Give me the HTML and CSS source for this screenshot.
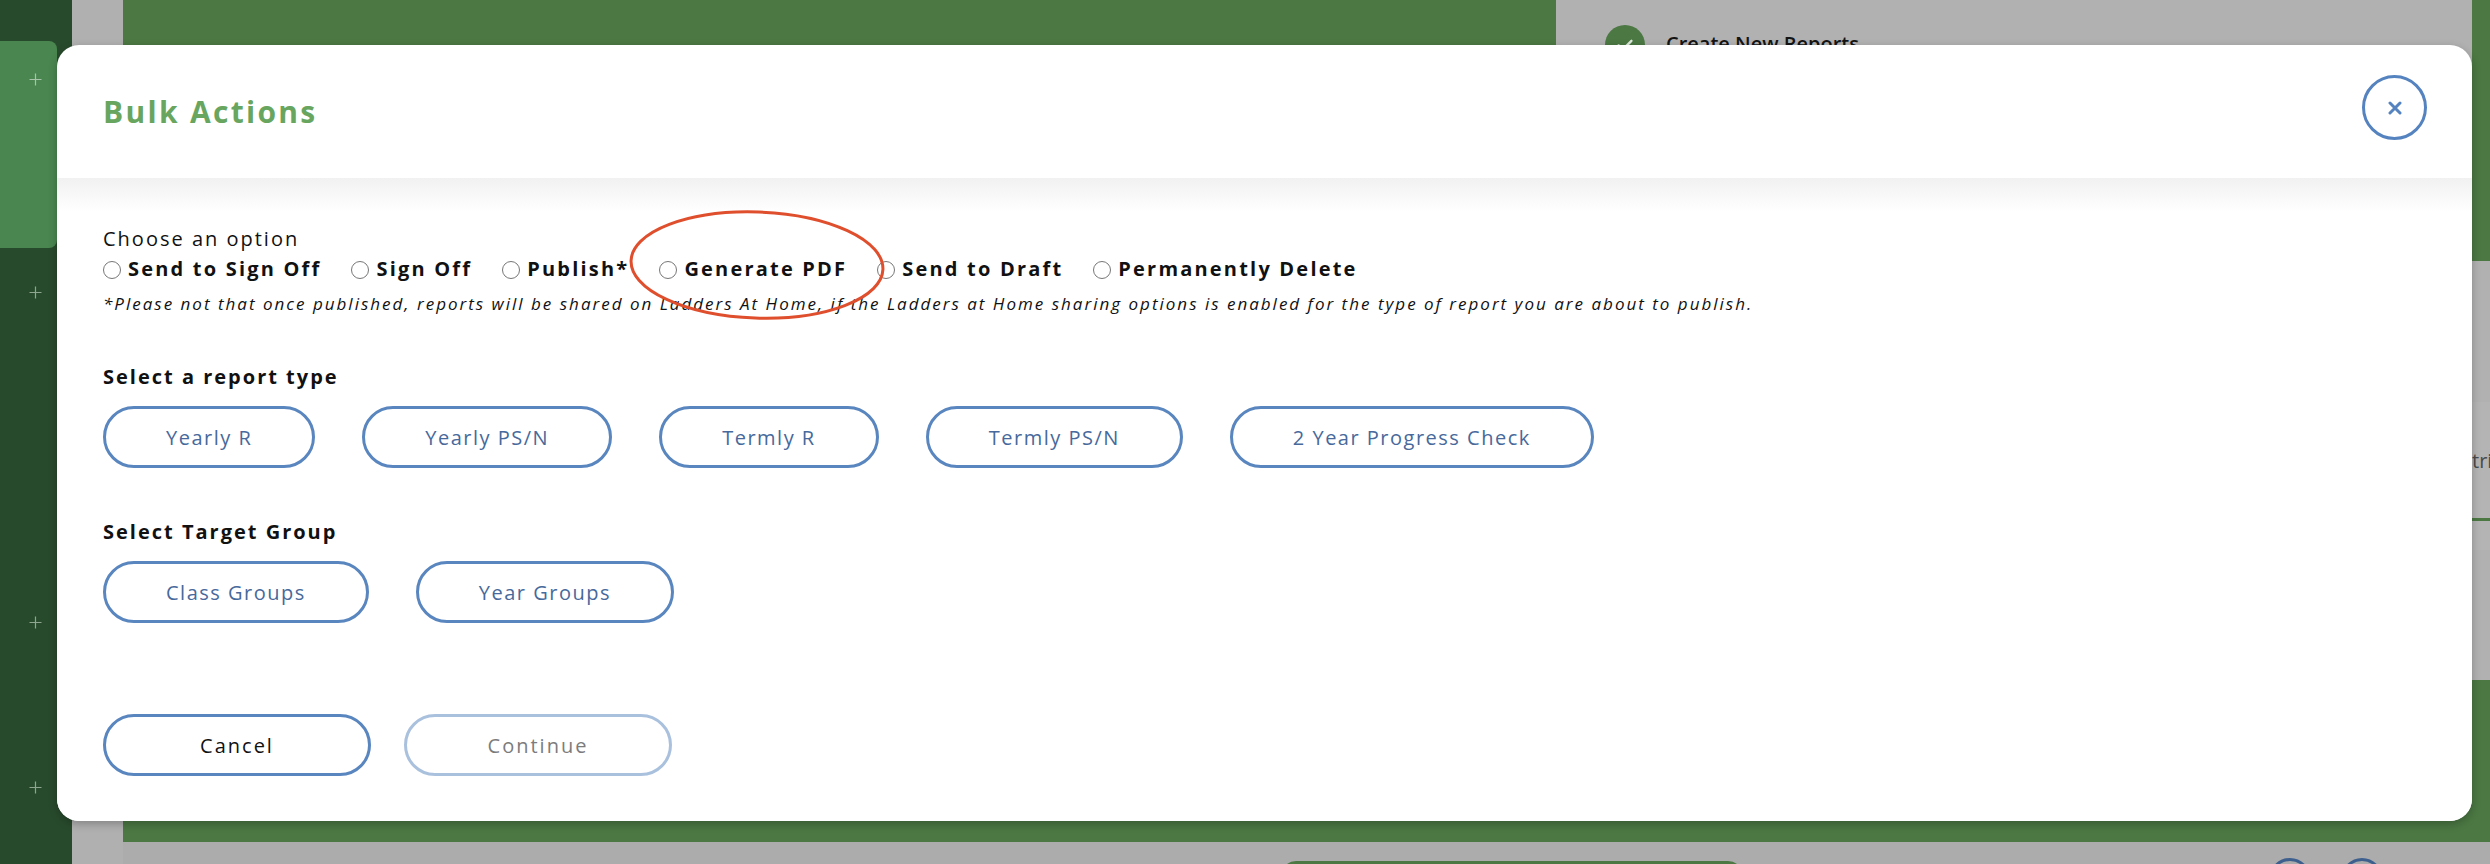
FILE: index.html
```html
<!DOCTYPE html>
<html lang="en">
<head>
<meta charset="utf-8">
<title>Bulk Actions</title>
<link rel="stylesheet" href="styles.css">
</head>
<body>
<div class="page">
  <aside class="sidebar">
    <div class="side-active">
      <svg class="plus" viewBox="0 0 13 13"><path d="M6.5 0.5v12M0.5 6.5h12" /></svg>
    </div>
    <svg class="plus plus-2" viewBox="0 0 13 13"><path d="M6.5 0.5v12M0.5 6.5h12" /></svg>
    <svg class="plus plus-3" viewBox="0 0 13 13"><path d="M6.5 0.5v12M0.5 6.5h12" /></svg>
    <svg class="plus plus-4" viewBox="0 0 13 13"><path d="M6.5 0.5v12M0.5 6.5h12" /></svg>
  </aside>
  <div class="gutter"></div>
  <main class="main">
    <div class="main-top">
      <section class="green-panel"></section>
      <section class="right-panel">
        <div class="rp-content">
          <span class="check">
            <svg viewBox="0 0 24 24" width="22" height="22"><path d="M5 12.5l4.5 4.5L19 7.5" fill="none" stroke="#dfe9dc" stroke-width="2.6" stroke-linecap="round" stroke-linejoin="round"/></svg>
          </span>
          <span class="rp-title">Create New Reports</span>
        </div>
        <div class="rp-edge">
          <div class="edge-green"></div>
          <div class="edge-card">
            <span class="edge-text">tri</span>
            <div class="edge-line"></div>
          </div>
        </div>
      </section>
    </div>
    <div class="green-band"></div>
    <footer class="footer">
      <div class="footer-bar"></div>
      <div class="footer-circles">
        <span class="fcircle"></span>
        <span class="fcircle"></span>
      </div>
    </footer>
  </main>
</div>

<div class="modal">
  <header class="modal-header">
    <h2 class="modal-title">Bulk Actions</h2>
    <button class="close-btn" aria-label="Close">
      <svg viewBox="0 0 14 14" width="14" height="14"><path d="M2 2l10 10M12 2L2 12" fill="none" stroke="#5583c0" stroke-width="3" stroke-linecap="round"/></svg>
    </button>
  </header>
  <div class="modal-body">
    <p class="label">Choose an option</p>
    <div class="radios">
      <label class="radio-opt"><span class="radio"></span>Send to Sign Off</label>
      <label class="radio-opt"><span class="radio"></span>Sign Off</label>
      <label class="radio-opt"><span class="radio"></span>Publish*</label>
      <label class="radio-opt"><span class="radio"></span>Generate PDF</label>
      <label class="radio-opt"><span class="radio"></span>Send to Draft</label>
      <label class="radio-opt"><span class="radio"></span>Permanently Delete</label>
    </div>
    <p class="note">*Please not that once published, reports will be shared on Ladders At Home, if the Ladders at Home sharing options is enabled for the type of report you are about to publish.</p>

    <h3 class="section-title">Select a report type</h3>
    <div class="chip-row">
      <button class="chip">Yearly R</button>
      <button class="chip">Yearly PS/N</button>
      <button class="chip">Termly R</button>
      <button class="chip">Termly PS/N</button>
      <button class="chip">2 Year Progress Check</button>
    </div>

    <h3 class="section-title section-title-2">Select Target Group</h3>
    <div class="chip-row">
      <button class="chip">Class Groups</button>
      <button class="chip">Year Groups</button>
    </div>

    <div class="actions">
      <button class="action cancel">Cancel</button>
      <button class="action continue">Continue</button>
    </div>
  </div>
</div>

<svg class="annotation" viewBox="0 0 262 118" width="262" height="118">
  <ellipse cx="131" cy="59" rx="126" ry="53" fill="none" stroke="#df4f2e" stroke-width="3" transform="rotate(2 131 59)"/>
</svg>
</body>
</html>
```

FILE: styles.css
```css
* {
  box-sizing: border-box;
  margin: 0;
  padding: 0;
}

html,
body {
  width: 2490px;
  height: 864px;
  overflow: hidden;
}

body {
  position: relative;
  font-family: "Open Sans", "Noto Sans", sans-serif;
  background: #acacac;
  color: #111;
}

/* ---------- background page ---------- */
.page {
  display: flex;
  height: 864px;
}

.sidebar {
  width: 72px;
  flex: none;
  background: #284a2c;
  display: flex;
  flex-direction: column;
}

.side-active {
  margin-top: 41px;
  width: 57px;
  height: 207px;
  background: #4a8650;
  border-radius: 0 8px 8px 0;
  padding: 32px 0 0 29px;
}

.plus {
  display: block;
  width: 13px;
  height: 13px;
  fill: none;
  stroke: #a9c2aa;
  stroke-width: 1.2;
}

.sidebar > .plus {
  margin-left: 29px;
  stroke: #8ea58f;
}

.plus-2 { margin-top: 38px; }
.plus-3 { margin-top: 317px; }
.plus-4 { margin-top: 152px; }

.gutter {
  width: 51px;
  flex: none;
  background: #b0b0b0;
}

.main {
  flex: 1;
  display: flex;
  flex-direction: column;
}

.main-top {
  height: 680px;
  display: flex;
}

.green-panel {
  width: 1433px;
  flex: none;
  background: #4b7843;
}

.right-panel {
  flex: 1;
  display: flex;
  background: #b1b1b1;
}

.rp-content {
  flex: 1;
  display: flex;
  align-items: flex-start;
  gap: 21px;
  padding: 25px 0 0 49px;
}

.check {
  width: 40px;
  height: 40px;
  border-radius: 50%;
  background: #4b7843;
  display: flex;
  align-items: center;
  justify-content: center;
}

.rp-title {
  margin-top: 5px;
  font-size: 20px;
  font-weight: 600;
  line-height: 27px;
  color: #141414;
}

.rp-edge {
  width: 18px;
  flex: none;
  display: flex;
  flex-direction: column;
  overflow: hidden;
}

.edge-green {
  height: 261px;
  background: #4b7843;
}

.edge-card {
  margin-top: 141px;
  height: 148px;
  background: #b4b4b4;
  padding-top: 45px;
}

.edge-text {
  display: block;
  font-size: 20px;
  line-height: 27px;
  color: #4a4a4a;
  white-space: nowrap;
}

.edge-line {
  margin-top: 44px;
  height: 3px;
  background: #4b7843;
}

.green-band {
  height: 162px;
  background: #4b7843;
}

.footer {
  height: 22px;
  display: flex;
  align-items: flex-start;
  padding-left: 1158px;
  overflow: hidden;
}

.footer-bar {
  width: 462px;
  height: 30px;
  margin-top: 19px;
  background: #4b7843;
  border-radius: 15px;
}

.footer-circles {
  display: flex;
  gap: 30px;
  margin-left: 526px;
  margin-top: 16px;
}

.fcircle {
  width: 42px;
  height: 42px;
  border: 3px solid #3d5f8e;
  border-radius: 50%;
}

/* ---------- modal ---------- */
.modal {
  position: absolute;
  left: 57px;
  top: 45px;
  width: 2415px;
  height: 776px;
  background: #fff;
  border-radius: 22px;
  box-shadow: 0 3px 8px rgba(0, 0, 0, 0.25);
  display: flex;
  flex-direction: column;
  overflow: hidden;
}

.modal-header {
  height: 133px;
  flex: none;
  display: flex;
  align-items: center;
  justify-content: space-between;
  padding: 0 45px 0 46px;
}

.modal-title {
  font-size: 30px;
  font-weight: 700;
  line-height: 1;
  letter-spacing: 2.3px;
  color: #68a660;
}

.close-btn {
  width: 65px;
  height: 65px;
  margin-bottom: 8px;
  border: 3px solid #5583c0;
  border-radius: 50%;
  background: #fff;
  display: flex;
  align-items: center;
  justify-content: center;
  cursor: pointer;
}

.modal-body {
  flex: 1;
  padding: 47px 46px 0;
  background: linear-gradient(#f1f1f1, #fff 34px);
}

.label {
  font-size: 20px;
  line-height: 27px;
  letter-spacing: 2px;
  color: #111;
}

.radios {
  display: flex;
  margin-top: 3px;
}

.radio-opt {
  display: flex;
  align-items: center;
  margin-right: 30px;
  font-size: 20px;
  font-weight: 700;
  line-height: 27px;
  letter-spacing: 2.2px;
  color: #111;
  cursor: pointer;
}

.radio {
  width: 18px;
  height: 18px;
  margin: 3px 7px 0 0;
  border: 1.5px solid #777;
  border-radius: 50%;
  background: #fff;
}

.note {
  margin-top: 10px;
  font-size: 17px;
  font-style: italic;
  line-height: 23px;
  letter-spacing: 2px;
  color: #111;
}

.section-title {
  margin-top: 48px;
  font-size: 20px;
  font-weight: 700;
  line-height: 27px;
  letter-spacing: 2px;
  color: #111;
}

.section-title-2 {
  margin-top: 50px;
}

.chip-row {
  display: flex;
  gap: 47px;
  margin-top: 16px;
}

.chip,
.action {
  height: 62px;
  padding: 0 60px;
  border: 3px solid #5a86bf;
  border-radius: 31px;
  background: #fff;
  font-family: inherit;
  font-size: 20px;
  line-height: 27px;
  letter-spacing: 1.5px;
  color: #47699b;
  cursor: pointer;
}

.actions {
  display: flex;
  gap: 33px;
  margin-top: 91px;
}

.action {
  width: 268px;
  padding: 0;
  letter-spacing: 2px;
}

.cancel {
  color: #111;
}

.continue {
  border-color: #aac1de;
  color: #7c7c7c;
}

.annotation {
  position: absolute;
  left: 626px;
  top: 206px;
}
```
